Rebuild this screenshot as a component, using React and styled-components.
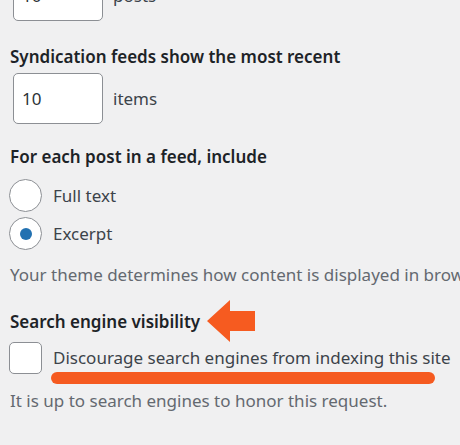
import React from "react";
import styled, { createGlobalStyle } from "styled-components";

const GlobalStyle = createGlobalStyle`
  html, body {
    margin: 0;
    padding: 0;
    background: #f0f0f1;
    overflow: hidden;
  }
  body {
    font-family: "Noto Sans", "Open Sans", sans-serif;
    color: #3c434a;
  }
`;

const Page = styled.div`
  width: 460px;
  height: 445px;
  overflow: hidden;
`;

const Content = styled.div`
  margin-top: -30px;
  padding-left: 10px;
  width: 600px;
  display: flex;
  flex-direction: column;
  align-items: flex-start;
`;

const Row = styled.div`
  display: flex;
  align-items: center;
  gap: ${(p) => p.$gap || 10}px;
  margin-top: ${(p) => p.$top || 0}px;
  line-height: 26px;
`;

const NumberInput = styled.div`
  box-sizing: border-box;
  width: 90px;
  height: 51px;
  margin-left: 3px;
  background: #fff;
  border: 1px solid #8c8f94;
  border-radius: 5px;
  padding-left: 8px;
  display: flex;
  align-items: center;
  font-size: 17px;
  color: #2c3338;
`;

const Unit = styled.span`
  font-size: 17px;
  color: #3c434a;
`;

const Label = styled.div`
  font-size: 17px;
  font-weight: 600;
  color: #1d2327;
  margin-top: ${(p) => p.$top || 0}px;
  display: flex;
  align-items: center;
  gap: 7px;
  line-height: 26px;
`;

const Radio = styled.span`
  box-sizing: border-box;
  width: 33px;
  height: 33px;
  margin-left: -1px;
  border-radius: 50%;
  background: #fff;
  border: 1px solid #8c8f94;
  display: flex;
  align-items: center;
  justify-content: center;

  &::after {
    content: "";
    width: 12px;
    height: 12px;
    border-radius: 50%;
    background: ${(p) => (p.$checked ? "#2271b1" : "transparent")};
  }
`;

const Checkbox = styled.span`
  box-sizing: border-box;
  width: 33px;
  height: 32px;
  margin-left: -1px;
  border-radius: 5px;
  background: #fff;
  border: 1px solid #8c8f94;
`;

const OptionText = styled.span`
  position: relative;
  font-size: 17px;
  color: #3c434a;
  white-space: nowrap;
`;

const Underline = styled.span`
  position: absolute;
  left: -2px;
  top: 27px;
  width: 384px;
  height: 12px;
  border-radius: 6px;
  background: #f55a20;
`;

const Description = styled.p`
  margin: ${(p) => p.$top || 0}px 0 0;
  font-size: 17px;
  color: #646970;
  white-space: nowrap;
  line-height: 26px;
`;

const Arrow = () => (
  <svg width="49" height="44" viewBox="0 0 49 44" style={{ flexShrink: 0 }}>
    <path d="M0 21 L23 0 L23 11 L48 11 L48 31 L23 31 L23 42 Z" fill="#f65b20" />
  </svg>
);

export default function App() {
  return (
    <Page>
      <GlobalStyle />
      <Content>
        <Row>
          <NumberInput>10</NumberInput>
          <Unit>posts</Unit>
        </Row>

        <Label $top={23}>Syndication feeds show the most recent</Label>
        <Row $top={3}>
          <NumberInput>10</NumberInput>
          <Unit>items</Unit>
        </Row>

        <Label $top={20}>For each post in a feed, include</Label>
        <Row $top={9} $gap={11}>
          <Radio />
          <OptionText>Full text</OptionText>
        </Row>
        <Row $top={5} $gap={11}>
          <Radio $checked />
          <OptionText>Excerpt</OptionText>
        </Row>

        <Description $top={12}>
          Your theme determines how content is displayed in browsers.
        </Description>

        <Label $top={12}>
          Search engine visibility
          <Arrow />
        </Label>
        <Row $top={-2} $gap={11}>
          <Checkbox />
          <OptionText>
            Discourage search engines from indexing this site
            <Underline />
          </OptionText>
        </Row>
        <Description $top={14}>It is up to search engines to honor this request.</Description>
      </Content>
    </Page>
  );
}
